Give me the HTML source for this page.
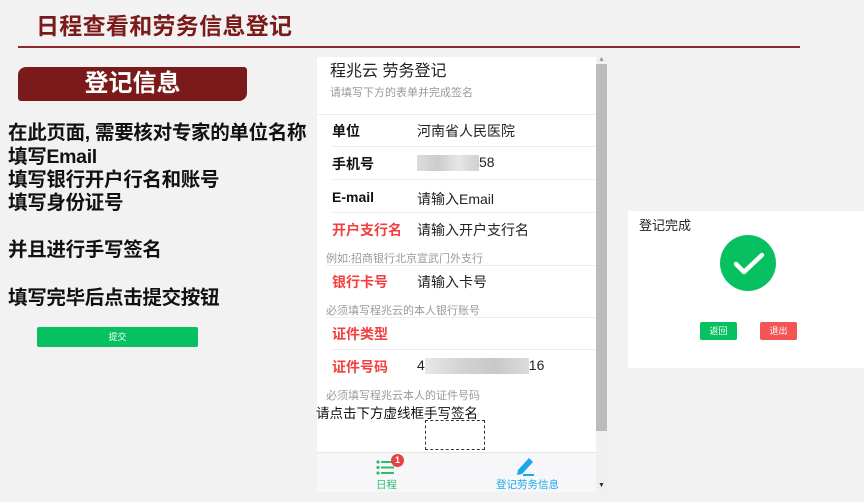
<!DOCTYPE html>
<html><head><meta charset="utf-8">
<style>
*{margin:0;padding:0;box-sizing:border-box}
body{width:864px;height:502px;background:#f2f2f2;position:relative;overflow:hidden;font-family:"Liberation Sans","Noto Sans CJK SC",sans-serif}
.a{position:absolute;white-space:nowrap}
.title{left:36px;top:9px;font-size:23px;font-weight:bold;color:#7b1a1a;line-height:34px;letter-spacing:0.3px}
.hr{left:18px;top:46px;width:782px;height:2px;background:#8b2a2a}
.tag{left:18px;top:67px;width:229px;height:34px;background:#7a1a1a;border-radius:8px 3px 8px 3px;color:#fff;font-size:24px;font-weight:bold;text-align:center;line-height:34px}
.lt{left:8px;font-size:19.5px;font-weight:bold;color:#111;line-height:24px;letter-spacing:-0.3px}
.sub{left:37px;top:327px;width:161px;height:20px;background:#07c160;border-radius:2px;color:#fff;font-size:9px;text-align:center;line-height:20px}
.ph{left:317px;top:57px;width:279px;height:435px;background:#fff}
.row{position:absolute;left:15px;width:264px;height:33px;border-bottom:1px solid #eee;font-size:14px}
.row b{position:absolute;left:0;top:7px;font-weight:bold;color:#111}
.row span{position:absolute;left:85px;top:7px;color:#222}
.red{color:#f43f3f!important}
.hint{position:absolute;left:9px;font-size:11px;color:#9a9a9a}
</style></head><body>
<div class="a title">日程查看和劳务信息登记</div>
<div class="a hr"></div>
<div class="a tag">登记信息</div>
<div class="a lt" style="top:121px">在此页面, 需要核对专家的单位名称</div>
<div class="a lt" style="top:145px">填写Email</div>
<div class="a lt" style="top:168px">填写银行开户行名和账号</div>
<div class="a lt" style="top:191px">填写身份证号</div>
<div class="a lt" style="top:238px">并且进行手写签名</div>
<div class="a lt" style="top:286px">填写完毕后点击提交按钮</div>
<div class="a sub">提交</div>

<div class="a ph">
  <div class="a" style="left:13px;top:0px;font-size:16px;color:#222">程兆云 劳务登记</div>
  <div class="a" style="left:13px;top:27px;font-size:11px;color:#999">请填写下方的表单并完成签名</div>
  <div style="position:absolute;left:0;top:57px;width:279px;border-top:1px solid #eee"></div>
  <div class="row" style="top:57px"><b>单位</b><span>河南省人民医院</span></div>
  <div class="row" style="top:90px"><b>手机号</b><span><i style="display:inline-block;width:62px;height:16px;background:linear-gradient(90deg,#ddd,#ccc,#e6e6e6,#d0d0d0);vertical-align:middle"></i>58</span></div>
  <div class="row" style="top:123px"><b style="top:9px">E-mail</b><span style="top:9px">请输入Email</span></div>
  <div class="row" style="top:156px;border-bottom:none"><b class="red">开户支行名</b><span>请输入开户支行名</span></div>
  <div class="hint" style="top:193px">例如:招商银行北京宣武门外支行</div>
  <div style="position:absolute;left:9px;top:208px;width:270px;border-top:1px solid #eee"></div>
  <div class="row" style="top:208px;border-bottom:none"><b class="red">银行卡号</b><span>请输入卡号</span></div>
  <div class="hint" style="top:245px">必须填写程兆云的本人银行账号</div>
  <div style="position:absolute;left:9px;top:260px;width:270px;border-top:1px solid #eee"></div>
  <div class="row" style="top:260px"><b class="red">证件类型</b></div>
  <div class="row" style="top:293px;border-bottom:none"><b class="red">证件号码</b><span>4<i style="display:inline-block;width:104px;height:16px;background:linear-gradient(90deg,#e8e8e8,#d4d4d4,#c8c8c8,#dcdcdc);vertical-align:middle"></i>16</span></div>
  <div class="hint" style="top:330px">必须填写程兆云本人的证件号码</div>
  <div class="a" style="left:-1px;top:345px;font-size:13.5px;color:#111">请点击下方虚线框手写签名</div>
  <div class="a" style="left:108px;top:363px;width:60px;height:30px;border:1px dashed #333"></div>
  <div class="a" style="left:0;top:395px;width:279px;height:40px;background:#f7f7f9;border-top:1px solid #e6e6e6">
    <svg style="position:absolute;left:59px;top:7px" width="18" height="15" viewBox="0 0 18 15"><g fill="#2ebd6a"><circle cx="2" cy="2" r="1.6"/><circle cx="2" cy="7.5" r="1.6"/><circle cx="2" cy="13" r="1.6"/><rect x="5" y="1" width="13" height="2"/><rect x="5" y="6.5" width="13" height="2"/><rect x="5" y="12" width="13" height="2"/></g></svg>
    <div class="a" style="left:74px;top:1px;width:13px;height:13px;border-radius:50%;background:#e64340;color:#fff;font-size:9px;font-weight:bold;text-align:center;line-height:13px">1</div>
    <div class="a" style="left:59px;top:24px;font-size:10.5px;color:#2ebd6a">日程</div>
    <svg style="position:absolute;left:198px;top:2px" width="20" height="22" viewBox="0 0 20 22"><path d="M3 15 L14 3 L18 7 L7 19 L2 20 Z" fill="#1aa7ec"/><rect x="8" y="19" width="11" height="2" fill="#1aa7ec"/></svg>
    <div class="a" style="left:179px;top:24px;font-size:10.5px;color:#1aa7ec">登记劳务信息</div>
  </div>
</div>
<div class="a" style="left:596px;top:57px;width:11px;height:437px;background:#f0f0f0"></div>
<div class="a" style="left:596px;top:64px;width:11px;height:367px;background:#bcbcbc"></div>
<div class="a" style="left:598px;top:56px;font-size:7px;color:#999">▲</div>
<div class="a" style="left:598px;top:482px;font-size:7px;color:#333">▼</div>

<div class="a" style="left:628px;top:211px;width:236px;height:157px;background:#fff">
  <div class="a" style="left:11px;top:4px;font-size:13px;color:#222">登记完成</div>
  <div class="a" style="left:92px;top:24px;width:56px;height:56px;border-radius:50%;background:#07c160">
    <svg width="56" height="56" viewBox="0 0 56 56"><path d="M16 29 L24 37 L42 20" stroke="#fff" stroke-width="4.5" fill="none" stroke-linecap="round" stroke-linejoin="round"/></svg>
  </div>
  <div class="a" style="left:72px;top:111px;width:37px;height:18px;background:#07c160;border-radius:2px;color:#fff;font-size:9px;text-align:center;line-height:18px">返回</div>
  <div class="a" style="left:132px;top:111px;width:37px;height:18px;background:#f35454;border-radius:2px;color:#fff;font-size:9px;text-align:center;line-height:18px">退出</div>
</div>
</body></html>
